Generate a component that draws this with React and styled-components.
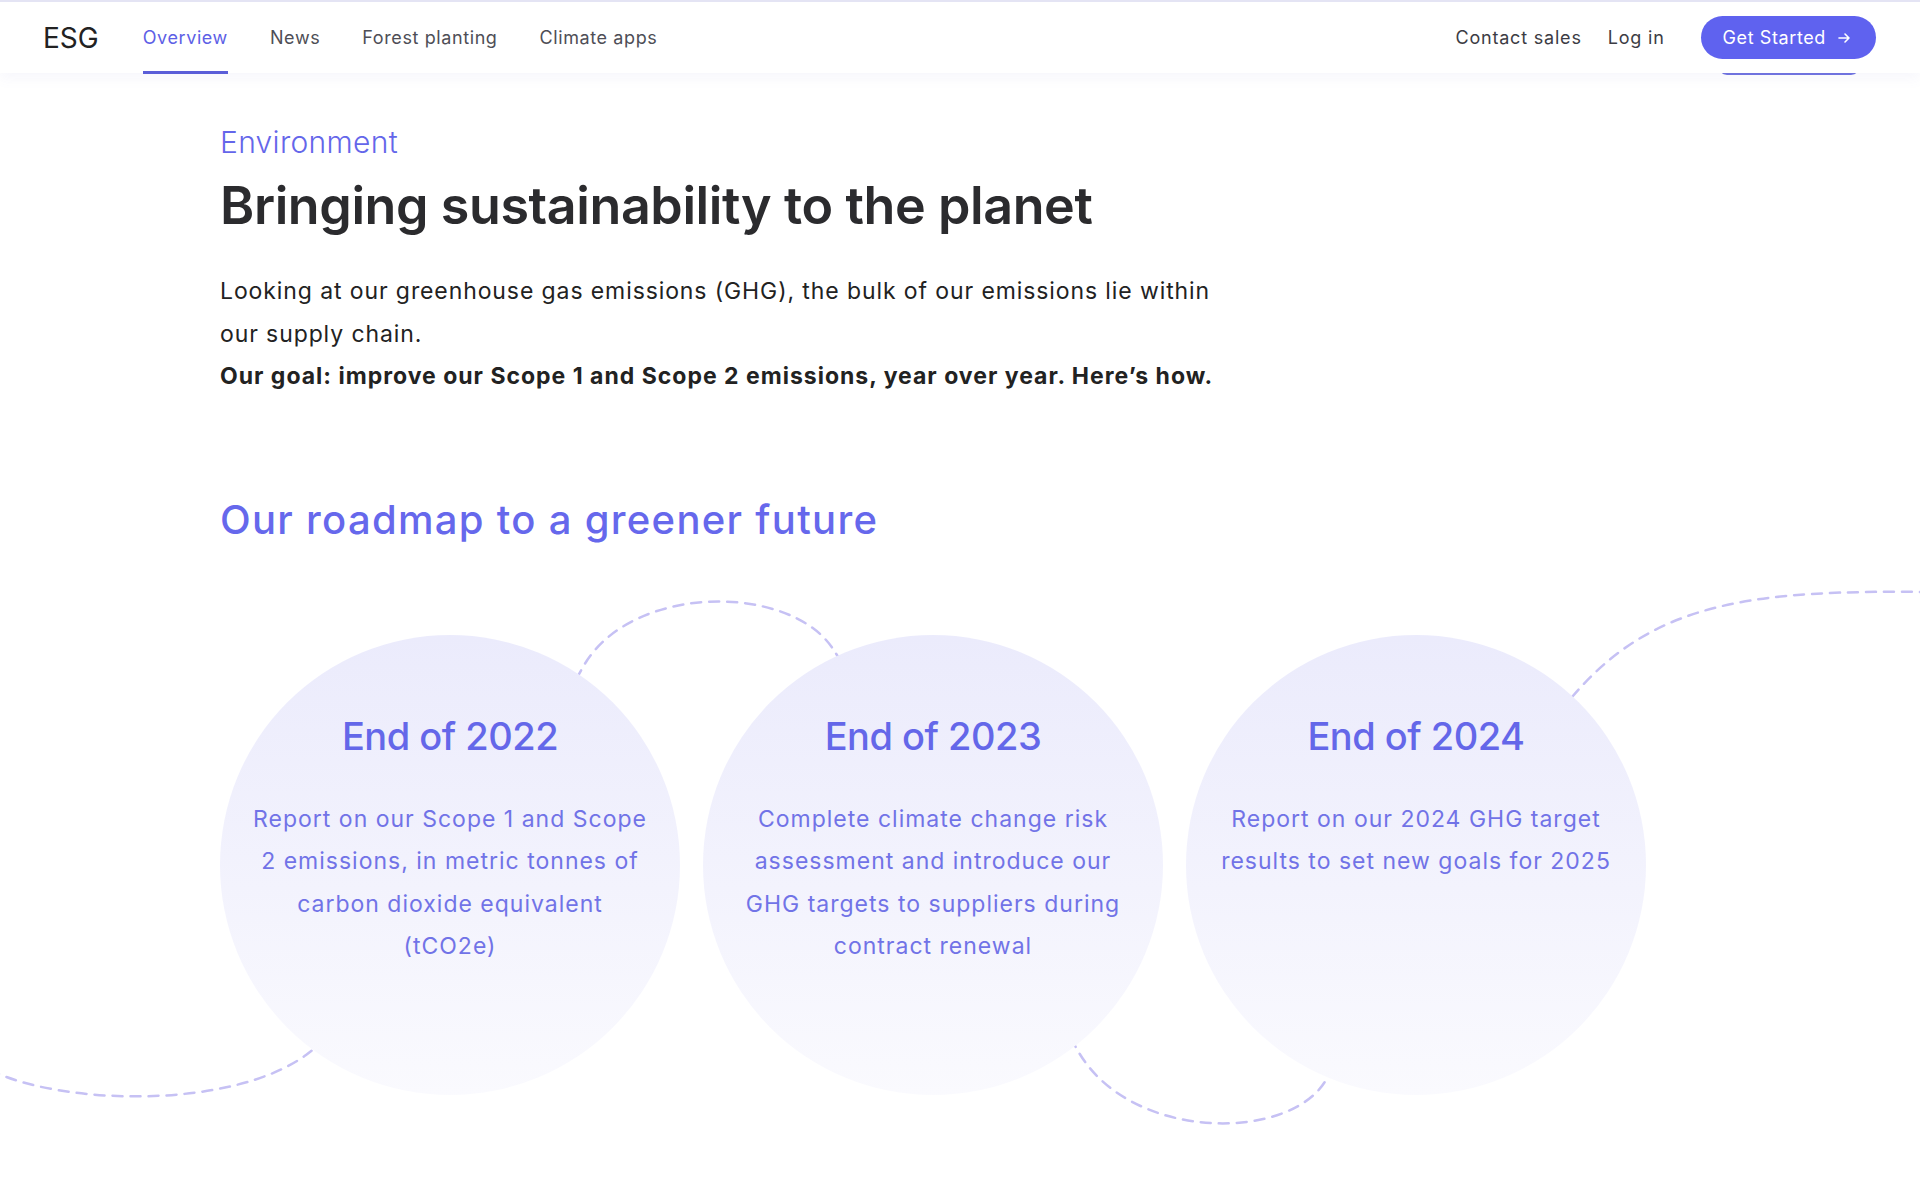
import React from 'react';
import styled, { createGlobalStyle } from 'styled-components';

const GlobalStyle = createGlobalStyle`
  html, body {
    margin: 0;
    padding: 0;
    background: #fff;
    font-family: Inter, "Open Sans", sans-serif;
  }
  * {
    box-sizing: border-box;
  }
`;

const navLinks = ['Overview', 'News', 'Forest planting', 'Climate apps'];

const milestones = [
  {
    title: 'End of 2022',
    text: ['Report on our Scope 1 and Scope', '2 emissions, in metric tonnes of', 'carbon dioxide equivalent', '(tCO2e)'],
  },
  {
    title: 'End of 2023',
    text: ['Complete climate change risk', 'assessment and introduce our', 'GHG targets to suppliers during', 'contract renewal'],
  },
  {
    title: 'End of 2024',
    text: ['Report on our 2024 GHG target', 'results to set new goals for 2025'],
  },
];

const App = () => {
  return (
    <Page>
      <GlobalStyle />
      <Wave viewBox="0 0 1920 1200" width="1920" height="1200">
        <path
          d="M -10 1070 C 60 1105, 230 1110, 306 1055 C 397 989, 536 751, 583 667 C 630 583, 790 583, 833 649 C 898 748, 1036 978, 1078 1051 C 1130 1142, 1290 1142, 1326 1080 C 1398 956, 1516 758, 1580 688 C 1660 600, 1760 590, 1930 592"
          fill="none"
          stroke="#c6c1f4"
          strokeWidth="2.5"
          strokeDasharray="10 8"
          strokeLinecap="round"
        />
      </Wave>

      <Header>
        <Logo>ESG</Logo>
        <Nav>
          {navLinks.map((link, i) => (
            <NavLink key={link} active={i === 0}>
              {link}
            </NavLink>
          ))}
        </Nav>
        <Actions>
          <TextLink>Contact sales</TextLink>
          <TextLink>Log in</TextLink>
          <StartButton>
            Get Started
            <svg width="16" height="16" viewBox="0 0 16 16" fill="none">
              <path d="M3 8h10M9 4l4 4-4 4" stroke="#fff" strokeWidth="1.6" strokeLinecap="round" strokeLinejoin="round" />
            </svg>
          </StartButton>
        </Actions>
      </Header>
      <ButtonPeek />

      <Main>
        <Eyebrow>Environment</Eyebrow>
        <Title>Bringing sustainability to the planet</Title>
        <Intro>
          Looking at our greenhouse gas emissions (GHG), the bulk of our emissions lie within
          <br />
          our supply chain.
          <Goal>Our goal: improve our Scope 1 and Scope 2 emissions, year over year. Here’s how.</Goal>
        </Intro>

        <Roadmap>Our roadmap to a greener future</Roadmap>

        <Circles>
          {milestones.map(m => (
            <Circle key={m.title}>
              <CircleTitle>{m.title}</CircleTitle>
              <CircleText>
                {m.text.map(line => (
                  <span key={line}>{line}</span>
                ))}
              </CircleText>
            </Circle>
          ))}
        </Circles>
      </Main>
    </Page>
  );
};

const Page = styled.div`
  position: relative;
  width: 1920px;
  height: 1200px;
  overflow: hidden;
  background: #fff;
`;

const Wave = styled.svg`
  position: absolute;
  top: 0;
  left: 0;
  pointer-events: none;
  z-index: 0;
`;

const Header = styled.header`
  position: relative;
  z-index: 3;
  display: flex;
  align-items: center;
  height: 73px;
  padding: 0 44px 0 43px;
  border-top: 2px solid #e4e4f4;
  background: #fff;
  box-shadow: 0 6px 12px rgba(120, 120, 200, 0.06);
`;

const ButtonPeek = styled.div`
  position: absolute;
  z-index: 2;
  top: 66px;
  left: 1718px;
  width: 142px;
  height: 9px;
  border-radius: 0 0 10px 10px;
  background: #7073e0;
`;

const Logo = styled.div`
  font-size: 28px;
  font-weight: 400;
  color: #222;
  letter-spacing: 0;
  margin-right: 44px;
`;

const Nav = styled.nav`
  display: flex;
  align-self: stretch;
  gap: 42px;
`;

const NavLink = styled.a`
  position: relative;
  display: flex;
  align-items: center;
  font-size: 18px;
  letter-spacing: 0.6px;
  color: ${p => (p.active ? '#5d60e6' : '#4e4e56')};
  cursor: pointer;

  &::after {
    content: '';
    display: ${p => (p.active ? 'block' : 'none')};
    position: absolute;
    left: 0;
    right: 0;
    bottom: -1px;
    height: 3px;
    background: #5b5ed8;
  }
`;

const Actions = styled.div`
  margin-left: auto;
  display: flex;
  align-items: center;
`;

const TextLink = styled.a`
  font-size: 18px;
  letter-spacing: 0.8px;
  color: #3c3c44;
  margin-right: 26px;
  cursor: pointer;
`;

const StartButton = styled.button`
  display: flex;
  align-items: center;
  gap: 10px;
  height: 43px;
  margin-left: 10px;
  padding: 0 24px 0 22px;
  border: none;
  border-radius: 22px;
  background: #5f62ef;
  color: #fff;
  font-family: inherit;
  font-size: 18px;
  letter-spacing: 0.6px;
  cursor: pointer;
`;

const Main = styled.main`
  position: relative;
  z-index: 1;
  padding: 51px 0 0 220px;
`;

const Eyebrow = styled.div`
  font-size: 30px;
  line-height: 36px;
  font-weight: 300;
  color: #6466ea;
  letter-spacing: 0.3px;
`;

const Title = styled.h1`
  margin: 15px 0 0;
  font-size: 52px;
  line-height: 62px;
  font-weight: 600;
  color: #2b2b2e;
  letter-spacing: -0.4px;
`;

const Intro = styled.p`
  margin: 33px 0 0;
  font-size: 23px;
  line-height: 42.5px;
  letter-spacing: 0.9px;
  color: #222;
`;

const Goal = styled.strong`
  display: block;
  font-weight: 700;
  letter-spacing: 1px;
`;

const Roadmap = styled.h2`
  margin: 98px 0 0;
  font-size: 40px;
  line-height: 48px;
  font-weight: 500;
  color: #6668ec;
  letter-spacing: 1.3px;
`;

const Circles = styled.div`
  display: flex;
  gap: 23px;
  margin-top: 91px;
`;

const Circle = styled.div`
  width: 460px;
  height: 460px;
  border-radius: 50%;
  background: linear-gradient(180deg, #ebebfc 0%, #f3f3fd 55%, #fafafe 100%);
  padding: 78px 0 0;
  display: flex;
  flex-direction: column;
  align-items: center;
`;

const CircleTitle = styled.h3`
  margin: 0;
  font-size: 38px;
  line-height: 46px;
  font-weight: 500;
  color: #6467e9;
  letter-spacing: -0.5px;
`;

const CircleText = styled.p`
  margin: 39px 0 0;
  display: flex;
  flex-direction: column;
  align-items: center;
  font-size: 23px;
  line-height: 42.5px;
  letter-spacing: 1px;
  color: #7173e7;
  text-align: center;
  white-space: nowrap;
`;

export default App;
